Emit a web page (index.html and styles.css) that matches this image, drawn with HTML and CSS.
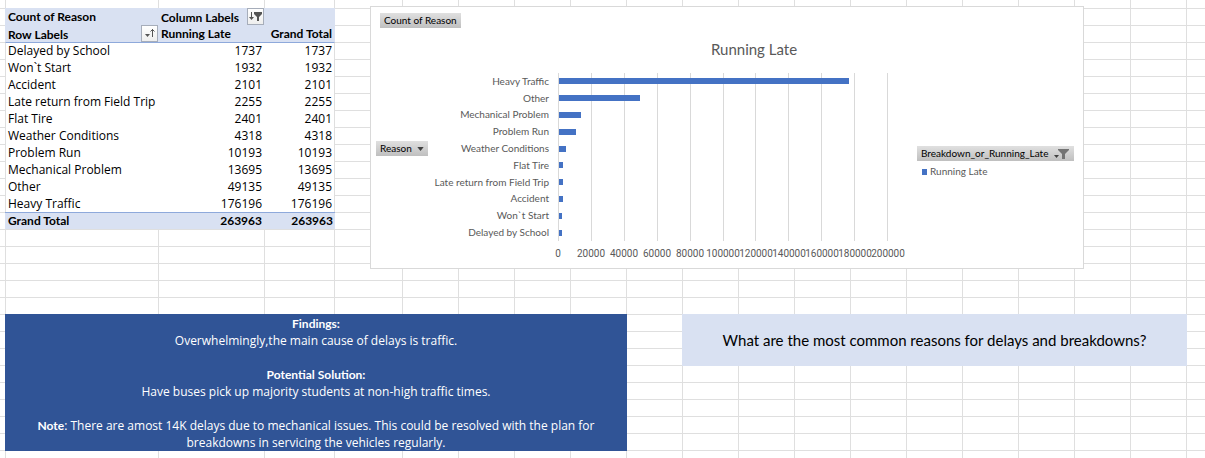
FILE: index.html
```html
<!DOCTYPE html>
<html lang="en">
<head>
<meta charset="utf-8">
<title>Running Late</title>
<link rel="stylesheet" href="styles.css">
</head>
<body>
<main class="sheet">
  <div class="top">
    <table class="pivot">
      <colgroup><col class="col-label"><col class="col-late"><col class="col-total"></colgroup>
      <thead>
        <tr>
          <th>Count of Reason</th>
          <th colspan="2"><div class="head head-column"><span>Column Labels</span>
            <button class="filter" type="button" aria-label="Filter columns"><svg viewBox="0 0 15 15"><path d="M3.500 3v6" stroke="#555" fill="none"/><path d="M1 8h5l-2.500 3z" fill="#555"/><path d="M6 3h8v2l-3 3v4H9V8L6 5z" fill="#555"/></svg></button></div></th>
        </tr>
        <tr>
          <th><div class="head head-row"><span>Row Labels</span>
            <button class="filter" type="button" aria-label="Sort rows"><svg viewBox="0 0 15 15"><path d="M3 8h5l-2.500 3z" fill="#555"/><path d="M10.500 3v8M8.500 5.500l2-2 2 2" stroke="#555" fill="none"/></svg></button></div></th>
          <th>Running Late</th>
          <th class="num">Grand Total</th>
        </tr>
      </thead>
      <tbody>
        <tr><td>Delayed by School</td><td>1737</td><td>1737</td></tr>
        <tr><td>Won`t Start</td><td>1932</td><td>1932</td></tr>
        <tr><td>Accident</td><td>2101</td><td>2101</td></tr>
        <tr><td>Late return from Field Trip</td><td>2255</td><td>2255</td></tr>
        <tr><td>Flat Tire</td><td>2401</td><td>2401</td></tr>
        <tr><td>Weather Conditions</td><td>4318</td><td>4318</td></tr>
        <tr><td>Problem Run</td><td>10193</td><td>10193</td></tr>
        <tr><td>Mechanical Problem</td><td>13695</td><td>13695</td></tr>
        <tr><td>Other</td><td>49135</td><td>49135</td></tr>
        <tr><td>Heavy Traffic</td><td>176196</td><td>176196</td></tr>
      </tbody>
      <tfoot>
        <tr><th>Grand Total</th><td>263963</td><td>263963</td></tr>
      </tfoot>
    </table>

    <section class="chart">
      <button class="field" type="button">Count of Reason</button>
      <h2 class="chart-title">Running Late</h2>
      <div class="chart-body">
        <button class="field field-reason" type="button">Reason <svg class="arrow" viewBox="0 0 8 5"><path d="M0 0h8L4 5z" fill="#404040"/></svg></button>
        <div class="labels">
          <span>Heavy Traffic</span><span>Other</span><span>Mechanical Problem</span><span>Problem Run</span><span>Weather Conditions</span><span>Flat Tire</span><span>Late return from Field Trip</span><span>Accident</span><span>Won`t Start</span><span>Delayed by School</span>
        </div>
        <div class="plot">
          <div class="lines"><i></i><i></i><i></i><i></i><i></i><i></i><i></i><i></i><i></i><i></i></div>
          <div class="bars">
            <b style="width:88.1%"></b><b style="width:24.6%"></b><b style="width:6.8%"></b><b style="width:5.1%"></b><b style="width:2.2%"></b><b style="width:1.2%"></b><b style="width:1.1%"></b><b style="width:1.1%"></b><b style="width:1%"></b><b style="width:0.9%"></b>
          </div>
        </div>
        <div class="legend">
          <button class="field field-legend" type="button">Breakdown_or_Running_Late <svg class="funnel" viewBox="0 0 16 12"><path d="M0 7h5L2.500 10z" fill="#404040"/><path d="M4 1h11v1l-4 4v5H8V6L4 2z" fill="#737373"/></svg></button>
          <div class="key"><i class="swatch"></i>Running Late</div>
        </div>
        <div class="axis"><span>0</span><span>20000</span><span>40000</span><span>60000</span><span>80000</span><span>100000</span><span>120000</span><span>140000</span><span>160000</span><span>180000</span><span>200000</span></div>
      </div>
    </section>
  </div>

  <div class="notes">
    <section class="findings">
      <strong>Findings:</strong><br>
      Overwhelmingly,the main cause of delays is traffic.<br><br>
      <strong>Potential Solution:</strong><br>
      Have buses pick up majority students at non-high traffic times.<br><br>
      <strong>Note</strong>: There are amost 14K delays due to mechanical issues. This could be resolved with the plan for<br>
      breakdowns in servicing the vehicles regularly.
    </section>
    <p class="question">What are the most common reasons for delays and breakdowns?</p>
  </div>
</main>
</body>
</html>
```
FILE: styles.css
```css
* { box-sizing: border-box; }

body {
  margin: 0;
  font: 12px/17px "Open Sans", "Noto Sans", sans-serif;
  color: #000;
  background: #fff;
}

button { font: inherit; color: inherit; margin: 0; }
strong { font-family: Lato, sans-serif; }

/* Worksheet gridlines: 17px rows, three wide columns, then 56px columns */
.sheet {
  --line: #dfdfdf;
  min-height: 100vh;
  padding: 6px 0 7px 5px;
  background:
    linear-gradient(var(--line), var(--line)) 5px 0 / 1px 100% no-repeat,
    linear-gradient(var(--line), var(--line)) 158px 0 / 1px 100% no-repeat,
    linear-gradient(var(--line), var(--line)) 264px 0 / 1px 100% no-repeat,
    linear-gradient(var(--line), var(--line)) 334px 0 / 1px 100% no-repeat,
    repeating-linear-gradient(90deg, var(--line) 0 1px, transparent 1px 56px) 402px 0 / 100% 100% no-repeat,
    repeating-linear-gradient(var(--line) 0 1px, transparent 1px 17px) 0 8px / 100% 100% no-repeat;
}

.top {
  display: grid;
  grid-template-columns: 330px minmax(0, 1fr);
  column-gap: 35px;
  align-items: start;
  padding-right: 121px;
}

/* Pivot table */
.pivot {
  width: 100%;
  margin-top: 2px;
  table-layout: fixed;
  border-collapse: separate;
  border-spacing: 0;
}
.col-label { width: 153px; }
.col-late { width: 106px; }
.pivot th, .pivot td {
  height: 17px;
  padding: 1px 3px 0;
  line-height: 16px;
  text-align: left;
  white-space: nowrap;
}
.pivot td + td, .pivot th + td { text-align: right; padding-right: 2px; }
.pivot th.num { text-align: right; }
.pivot thead th, .pivot tfoot th, .pivot tfoot td {
  background: #d9e1f2;
  font-family: Lato, sans-serif;
  font-weight: 700;
}
.pivot tbody tr:first-child td, .pivot tfoot th, .pivot tfoot td {
  padding-top: 0;
  border-top: 1px solid #8ea9db;
}
.pivot tbody td { background: #fff; }
.pivot tbody td:first-child { border-left: 1px solid var(--line); padding-left: 2px; }
.pivot tbody td:last-child { border-right: 1px solid var(--line); padding-right: 2px; }
.head { display: flex; height: 16px; line-height: 17px; }
.head-column { gap: 8px; }
.head-row { justify-content: space-between; margin-right: -3px; }
.filter {
  flex: none;
  width: 17px;
  height: 17px;
  margin-top: -1px;
  padding: 0;
  border: 1px solid #a6adba;
  background: linear-gradient(#fff, #eee);
}
.filter svg { display: block; width: 15px; height: 15px; }

/* Pivot chart */
.chart {
  padding: 6px 9px 6px 5px;
  border: 1px solid #d9d9d9;
  background: #fff;
  font-family: Lato, sans-serif;
  font-size: 10px;
  color: #595959;
}
.field {
  display: flex;
  align-items: center;
  height: 15px;
  margin-left: 4px;
  padding: 0 4px;
  border: 0;
  background: linear-gradient(#e0e0e0, #bfbfbf);
  color: #000;
  line-height: 15px;
  white-space: nowrap;
}
.field-reason { align-self: center; margin: 0 0 17px; justify-content: space-between; }
.field-legend { width: 100%; margin-left: 0; justify-content: space-between; }
.arrow { width: 7px; height: 4px; }
.funnel { width: 16px; height: 12px; }
.chart-title {
  margin: 11px 0 14px 58px;
  font-size: 15px;
  font-weight: 400;
  line-height: 20px;
  text-align: center;
}
.chart-body {
  display: grid;
  grid-template-columns: 52px 121px minmax(0, 1fr) 157px;
  grid-template-rows: 168px auto;
}
.labels {
  display: grid;
  grid-template-rows: repeat(10, minmax(0, 1fr));
  align-items: center;
  justify-items: end;
  line-height: 15px;
  white-space: nowrap;
}
.plot { display: grid; margin: 0 29px 0 9px; }
.lines, .bars { grid-area: 1 / 1; display: grid; }
.lines { grid-template-columns: repeat(10, minmax(0, 1fr)); border-right: 1px solid #d9d9d9; }
.lines i { border-left: 1px solid #d9d9d9; }
.bars { grid-template-rows: repeat(10, minmax(0, 1fr)); align-items: center; padding-left: 1px; }
.bars b { height: 6px; background: #4472c4; }
.legend { padding-top: 73px; }
.key { display: flex; align-items: center; gap: 3px; margin-top: 2px; padding-left: 5px; }
.swatch { width: 5px; height: 6px; background: #4472c4; }
.axis {
  grid-column: 3;
  display: flex;
  justify-content: space-between;
  margin: 4px 29px 0 9px;
  font-family: Roboto, sans-serif;
}
.axis span { width: 0; display: flex; justify-content: center; }

/* Merged text cells */
.notes {
  display: grid;
  grid-template-columns: 622fr 505fr;
  column-gap: 55px;
  align-items: start;
  margin-top: 45px;
  padding-right: 18px;
}
.findings {
  padding: 1px 8px 0;
  background: #305496;
  color: #fff;
  text-align: center;
}
.question {
  margin: 0;
  padding: 17px 8px;
  background: #d9e1f2;
  font-family: Lato, sans-serif;
  font-size: 15px;
  line-height: 18px;
  text-align: center;
}
```
